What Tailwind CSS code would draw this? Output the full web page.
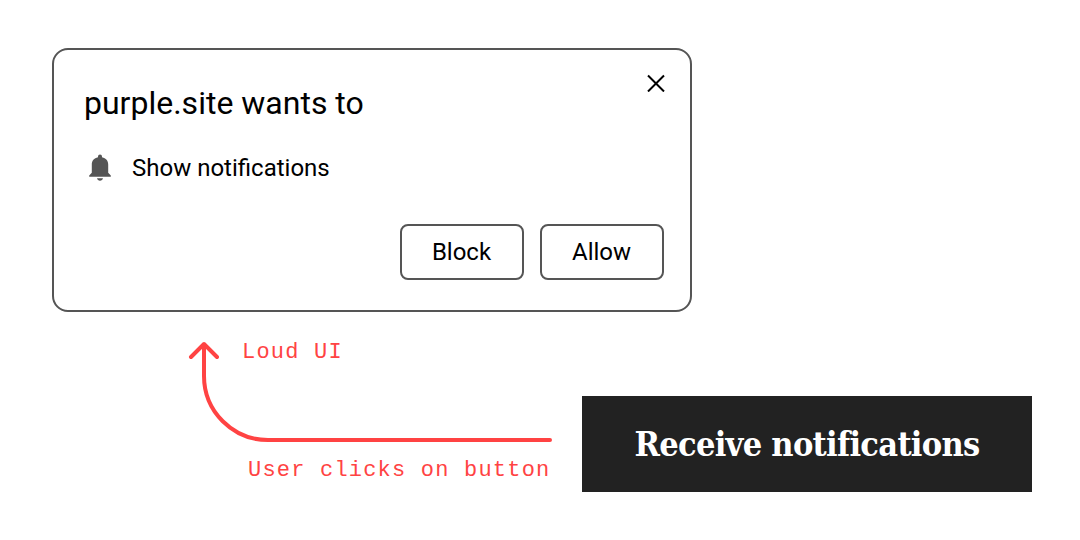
<!DOCTYPE html>
<html lang="en">
<head>
  <meta charset="UTF-8" />
  <meta name="viewport" content="width=device-width, initial-scale=1.0"/>
  <title>Notification prompt</title>
  <script src="https://cdn.jsdelivr.net/npm/@tailwindcss/browser@4"></script>
</head>
<body class="bg-white w-[1080px] h-[540px] overflow-hidden pl-[52px] pt-12 text-black font-[Roboto,sans-serif]">
  <!-- Permission prompt -->
  <div class="w-[640px] h-[264px] border-2 border-[#555] rounded-2xl pl-[30px] pr-[26px] pt-[33px]">
    <div class="flex justify-between">
      <h1 class="text-[32px] leading-10 whitespace-nowrap">purple.site wants to</h1>
      <button type="button" aria-label="Close" class="w-4 h-10 -mt-5">
        <svg class="w-[18px] h-[18px] -ml-[1px]" viewBox="0 0 18 18" fill="none" stroke="#000" stroke-width="2">
          <path d="M1 1.500l16 16M17 1.500L1 17.500"/>
        </svg>
      </button>
    </div>
    <div class="flex items-center gap-4 mt-[29px] h-8">
      <svg class="w-8 h-8" viewBox="0 0 32 32" fill="#555">
        <path d="M16 2.500a2 2 0 0 1 2 2v.7c4 .9 6.200 3.600 6.200 7.300v8.200l2.600 2.800v1.300H5.200v-1.300l2.600-2.800v-8.200c0-3.700 2.200-6.400 6.200-7.300v-.7a2 2 0 0 1 2-2zM13 26.300h6c-.3 1.500-1.500 2.500-3 2.500s-2.700-1-3-2.500z"/>
      </svg>
      <p class="text-2xl">Show notifications</p>
    </div>
    <div class="flex justify-end gap-4 mt-10">
      <button type="button" class="w-[124px] h-14 pr-px border-2 border-[#555] rounded-lg text-2xl">Block</button>
      <button type="button" class="w-[124px] h-14 pr-px border-2 border-[#555] rounded-lg text-2xl">Allow</button>
    </div>
  </div>

  <div class="flex">
    <!-- Arrow from the button up to the prompt -->
    <svg class="w-[530px] h-[200px] shrink-0" viewBox="52 312 530 200">
      <path d="M550 440H268A64 64 0 0 1 204 376V344M191 357l13-13 13 13" fill="none" stroke="#ff4343" stroke-width="4" stroke-linecap="round" stroke-linejoin="round"/>
      <g class="font-['Liberation_Mono',monospace] text-[22px] tracking-[1.2px] fill-[#ff4343]">
        <text x="242" y="358">Loud UI</text>
        <text x="248" y="476">User clicks on button</text>
      </g>
    </svg>
    <button type="button" class="w-[450px] h-24 mt-21 shrink-0 bg-[#222] text-white font-bold text-[34px] tracking-[-0.7px] whitespace-nowrap font-['DejaVu_Serif_Condensed','DejaVu_Serif',serif]">Receive notifications</button>
  </div>
</body>
</html>
